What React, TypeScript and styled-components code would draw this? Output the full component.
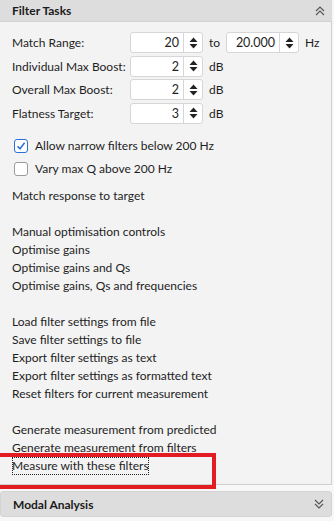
import React from 'react';
import styled, { createGlobalStyle } from 'styled-components';

const GlobalStyle = createGlobalStyle`
  html, body {
    margin: 0;
    padding: 0;
    background: #f7f7f7;
    font-family: Lato, "Noto Sans", sans-serif;
    font-size: 12px;
    color: #1e1e1e;
  }
`;

const Page = styled.div`
  position: relative;
  width: 332px;
  height: 521px;
  display: flex;
  flex-direction: column;
  overflow: hidden;
`;

const Header = styled.div<{ $rounded?: boolean }>`
  height: ${(p) => (p.$rounded ? '24px' : '21px')};
  flex-shrink: 0;
  display: flex;
  align-items: center;
  justify-content: space-between;
  padding: 0 6px 0 12px;
  background: #dddddd;
  border-bottom: 1px solid #d2d2d2;
  border-radius: ${(p) => (p.$rounded ? '3px' : '0')};
  border: ${(p) => (p.$rounded ? '1px solid #d4d4d4' : undefined)};
  font-weight: 700;
  font-size: 12px;
  color: #1a1a1a;
`;

const Body = styled.div`
  background: #f3f3f3;
  border-right: 1px solid #cfcfcf;
  border-bottom: 1px solid #cfcfcf;
  padding: 10px 0 9px 12px;
  display: flex;
  flex-direction: column;
`;

const FormRow = styled.div`
  height: 21px;
  display: flex;
  align-items: center;
  margin-bottom: 2.5px;
`;

const Label = styled.span`
  width: 118px;
  white-space: nowrap;
`;

const Unit = styled.span`
  margin: 0 6px;
`;

const Spin = styled.div`
  width: 73px;
  height: 21px;
  box-sizing: border-box;
  display: flex;
  background: #ffffff;
  border: 1px solid #d6d6d6;
  border-radius: 3px;
`;

const SpinValue = styled.div`
  flex: 1;
  display: flex;
  align-items: center;
  justify-content: flex-end;
  padding-right: 4px;
  font-size: 12.5px;
`;

const SpinButtons = styled.div`
  width: 18px;
  border-left: 1px solid #d6d6d6;
  display: flex;
  align-items: center;
  justify-content: center;
`;

const CheckRow = styled.label`
  height: 23px;
  display: flex;
  align-items: center;
  gap: 7px;
  padding-left: 2px;
`;

const Box = styled.span<{ $checked?: boolean }>`
  width: 14px;
  height: 14px;
  box-sizing: border-box;
  border-radius: 3px;
  background: #ffffff;
  border: 1px solid ${(p) => (p.$checked ? '#2b6fd6' : '#9a9a9a')};
  display: flex;
  align-items: center;
  justify-content: center;
`;

const Group = styled.div<{ $first?: boolean }>`
  display: flex;
  flex-direction: column;
  margin-top: ${(p) => (p.$first ? 7 : 18)}px;
`;

const Link = styled.div<{ $focused?: boolean }>`
  height: 18px;
  line-height: 18px;
  align-self: flex-start;
  white-space: nowrap;
  box-sizing: border-box;
  outline: ${(p) => (p.$focused ? '1px dotted #222' : 'none')};
  outline-offset: -1px;
`;

const Gap = styled.div`
  height: 8px;
`;

const Spacer = styled.div`
  height: 6px;
  flex-shrink: 0;
`;

const Highlight = styled.div`
  position: absolute;
  left: -6px;
  top: 453px;
  width: 222px;
  height: 36px;
  box-sizing: border-box;
  border: 4px solid #e31b23;
`;

const Arrows = () => (
  <svg width="9" height="12" viewBox="0 0 9 12">
    <path d="M4.5 0.5 L8.5 5 L0.5 5 Z" fill="#222" />
    <path d="M4.5 11.5 L8.5 7 L0.5 7 Z" fill="#222" />
  </svg>
);

const SpinBox = ({ value }: { value: string }) => (
  <Spin>
    <SpinValue>{value}</SpinValue>
    <SpinButtons>
      <Arrows />
    </SpinButtons>
  </Spin>
);

const Chevrons = ({ up }: { up?: boolean }) => (
  <svg width="12" height="12" viewBox="0 0 12 12" style={{ transform: up ? 'none' : 'rotate(180deg)' }}>
    <path d="M2 6 L6 2 L10 6 M2 10 L6 6 L10 10" fill="none" stroke="#555" strokeWidth="1.1" />
  </svg>
);

const Check = () => (
  <svg width="10" height="10" viewBox="0 0 10 10">
    <path d="M1.5 5.2 L4 7.8 L8.6 1.8" fill="none" stroke="#2b6fd6" strokeWidth="1.5" />
  </svg>
);

const groups: string[][] = [
  ['Manual optimisation controls', 'Optimise gains', 'Optimise gains and Qs', 'Optimise gains, Qs and frequencies'],
  [
    'Load filter settings from file',
    'Save filter settings to file',
    'Export filter settings as text',
    'Export filter settings as formatted text',
    'Reset filters for current measurement',
  ],
];

const App = () => {
  return (
    <Page>
      <GlobalStyle />
      <Header>
        <span>Filter Tasks</span>
        <Chevrons up />
      </Header>
      <Body>
        <FormRow>
          <Label>Match Range:</Label>
          <SpinBox value="20" />
          <Unit>to</Unit>
          <SpinBox value="20.000" />
          <Unit>Hz</Unit>
        </FormRow>
        <FormRow>
          <Label>Individual Max Boost:</Label>
          <SpinBox value="2" />
          <Unit>dB</Unit>
        </FormRow>
        <FormRow>
          <Label>Overall Max Boost:</Label>
          <SpinBox value="2" />
          <Unit>dB</Unit>
        </FormRow>
        <FormRow>
          <Label>Flatness Target:</Label>
          <SpinBox value="3" />
          <Unit>dB</Unit>
        </FormRow>
        <Gap />
        <CheckRow>
          <Box $checked>
            <Check />
          </Box>
          Allow narrow filters below 200 Hz
        </CheckRow>
        <CheckRow>
          <Box />
          Vary max Q above 200 Hz
        </CheckRow>
        <Group $first>
          <Link>Match response to target</Link>
        </Group>
        {groups.map((g, i) => (
          <Group key={i}>
            {g.map((t) => (
              <Link key={t}>{t}</Link>
            ))}
          </Group>
        ))}
        <Group>
          <Link>Generate measurement from predicted</Link>
          <Link>Generate measurement from filters</Link>
          <Link $focused>Measure with these filters</Link>
        </Group>
      </Body>
      <Spacer />
      <Header $rounded>
        <span>Modal Analysis</span>
        <Chevrons />
      </Header>
      <Highlight />
    </Page>
  );
};

export default App;
